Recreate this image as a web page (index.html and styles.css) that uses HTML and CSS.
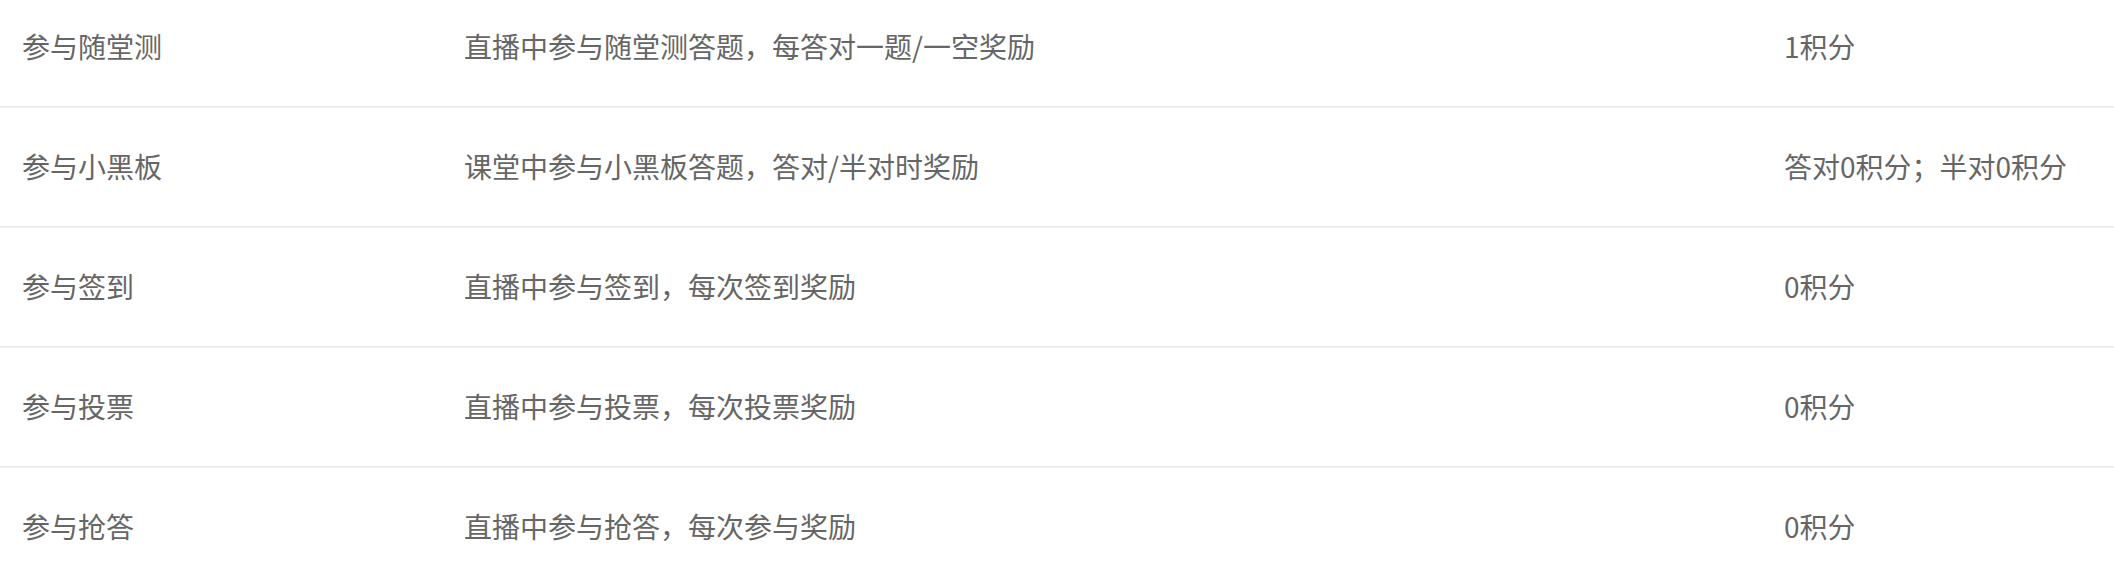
FILE: index.html
```html
<!DOCTYPE html>
<html lang="zh-CN">
<head>
<meta charset="utf-8">
<link rel="stylesheet" href="styles.css">
</head>
<body>
<div class="table">
  <div class="row">
    <div class="cell name">参与随堂测</div>
    <div class="cell desc">直播中参与随堂测答题，每答对一题/一空奖励</div>
    <div class="cell pts">1积分</div>
  </div>
  <div class="row">
    <div class="cell name">参与小黑板</div>
    <div class="cell desc">课堂中参与小黑板答题，答对/半对时奖励</div>
    <div class="cell pts">答对0积分；半对0积分</div>
  </div>
  <div class="row">
    <div class="cell name">参与签到</div>
    <div class="cell desc">直播中参与签到，每次签到奖励</div>
    <div class="cell pts">0积分</div>
  </div>
  <div class="row">
    <div class="cell name">参与投票</div>
    <div class="cell desc">直播中参与投票，每次投票奖励</div>
    <div class="cell pts">0积分</div>
  </div>
  <div class="row">
    <div class="cell name">参与抢答</div>
    <div class="cell desc">直播中参与抢答，每次参与奖励</div>
    <div class="cell pts">0积分</div>
  </div>
</div>
</body>
</html>
```

FILE: styles.css
```css
html, body {
  margin: 0;
  padding: 0;
  background: #ffffff;
  overflow: hidden;
}
body {
  font-family: "Noto Sans CJK SC", "Noto Sans", sans-serif;
  font-size: 28px;
  color: #666666;
}
.table {
  margin-top: -12px;
  display: flex;
  flex-direction: column;
}
.row {
  display: grid;
  grid-template-columns: 442px 1320px 1fr;
  height: 118px;
  border-bottom: 2px solid #ececf1;
}
.cell {
  display: flex;
  align-items: center;
  padding-left: 22px;
  padding-bottom: 3px;
  white-space: nowrap;
}
```
